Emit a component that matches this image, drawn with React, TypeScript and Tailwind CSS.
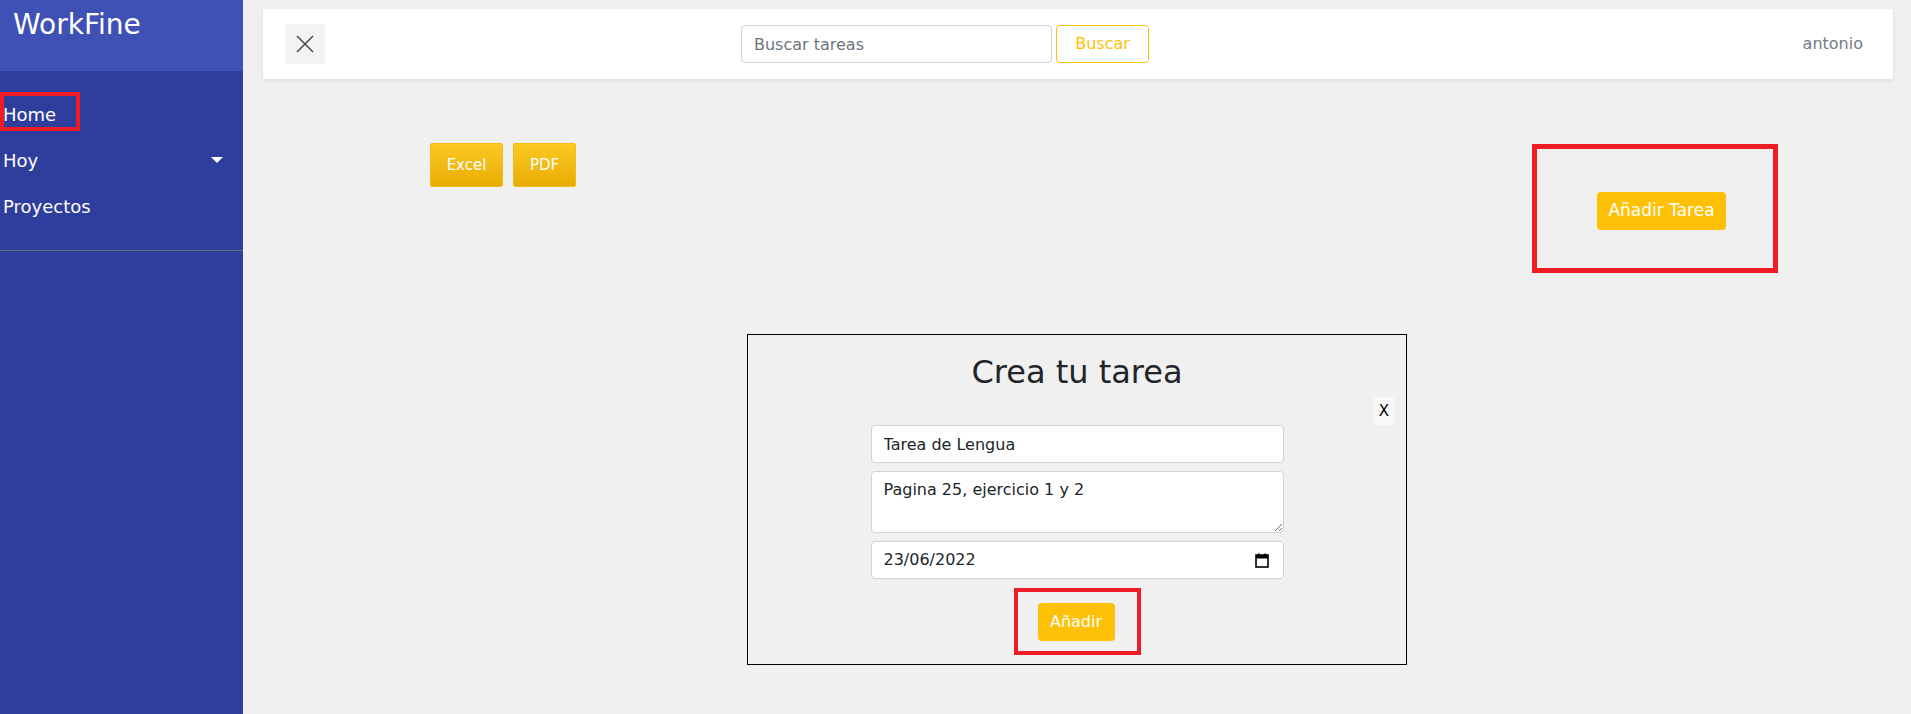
import React from "react";

function CloseIcon() {
    return (
        <svg width="18" height="18" viewBox="0 0 18 18" fill="none" stroke="#4a4a4a" strokeWidth="1.6">
            <line x1="1" y1="1" x2="17" y2="17" />
            <line x1="17" y1="1" x2="1" y2="17" />
        </svg>
    );
}

function CalendarIcon() {
    return (
        <svg width="14" height="15" viewBox="0 0 14 15" fill="none">
            <rect x="1" y="2" width="12" height="12" stroke="#000" strokeWidth="1.6" />
            <rect x="1" y="2" width="12" height="3.5" fill="#000" />
            <rect x="3" y="0.5" width="1.6" height="2.5" fill="#000" />
            <rect x="9.4" y="0.5" width="1.6" height="2.5" fill="#000" />
        </svg>
    );
}

export default function App() {
    return (
        <div className="flex h-screen w-full bg-[#f0f0f0] font-['DejaVu_Sans',sans-serif] overflow-hidden">
            {/* sidebar */}
            <aside className="w-[243px] shrink-0 bg-[#2f3d9d] text-white">
                <div className="h-[71px] bg-[#3f51b5] pl-[13px] pt-[8px]">
                    <h1 className="text-[28px] leading-[33px] font-medium">WorkFine</h1>
                </div>
                <nav className="pt-[20px] pb-[21px] border-b border-[#4f7a7e]">
                    <div className="relative h-[46px] flex items-center pl-[3px] text-[18px]">
                        Home
                        <span className="absolute left-0 top-[1px] w-[80px] h-[39px] border-4 border-[#ee1c25]"></span>
                    </div>
                    <div className="h-[46px] flex items-center justify-between pl-[3px] pr-[20px] text-[18px]">
                        Hoy
                        <span className="w-0 h-0 border-l-[6px] border-r-[6px] border-t-[6px] border-l-transparent border-r-transparent border-t-white"></span>
                    </div>
                    <div className="h-[46px] flex items-center pl-[3px] text-[18px]">Proyectos</div>
                </nav>
            </aside>

            {/* main */}
            <main className="flex-1 flex flex-col">
                <header className="mt-[9px] ml-[20px] mr-[18px] h-[70px] bg-white shadow-[0_2px_4px_rgba(0,0,0,0.08)] flex items-center pl-[22px] pr-[30px]">
                    <button className="w-[40px] h-[40px] bg-[#f3f3f3] flex items-center justify-center">
                        <CloseIcon />
                    </button>
                    <div className="ml-[416px] flex gap-[4px]">
                        <input
                            className="w-[311px] h-[38px] border border-[#ced4da] rounded-[4px] px-[12px] text-[16px] text-[#212529] placeholder:text-[#6c757d] bg-white"
                            placeholder="Buscar tareas"
                        />
                        <button className="w-[93px] h-[38px] border border-[#ffc107] rounded-[4px] text-[#ffc107] text-[16px]">
                            Buscar
                        </button>
                    </div>
                    <span className="ml-auto text-[16px] text-[#757b85]">antonio</span>
                </header>

                <div className="mt-[64px] pl-[187px] pr-[133px] flex justify-between items-start">
                    <div className="flex gap-[10px]">
                        <button className="w-[73px] h-[44px] rounded-[2px] border border-[#f4bf10] bg-gradient-to-b from-[#fdc820] to-[#e8ad03] text-white text-[15px]">
                            Excel
                        </button>
                        <button className="w-[63px] h-[44px] rounded-[2px] border border-[#f4bf10] bg-gradient-to-b from-[#fdc820] to-[#e8ad03] text-white text-[15px]">
                            PDF
                        </button>
                    </div>
                    <div className="mt-[1px] w-[246px] h-[129px] border-[5px] border-[#ee1c25] pl-[60px] pt-[43px]">
                        <button className="w-[129px] h-[38px] rounded-[4px] bg-[#ffc107] text-white text-[17px]">
                            Añadir Tarea
                        </button>
                    </div>
                </div>

                <section className="mt-[61px] mx-auto w-[660px] border border-black flex flex-col items-center pb-[9px]">
                    <h2 className="mt-[18px] text-[32px] leading-[38px] text-[#212529]">Crea tu tarea</h2>
                    <div className="mt-[6px] w-full flex justify-end pr-[12px]">
                        <button className="w-[20px] h-[28px] bg-[#f8f8f8] text-[15px] text-black">X</button>
                    </div>
                    <div className="w-[413px] flex flex-col gap-[8px]">
                        <input
                            className="h-[38px] border border-[#ced4da] rounded-[4px] px-[12px] text-[16px] text-[#212529] bg-white"
                            defaultValue="Tarea de Lengua"
                        />
                        <textarea
                            className="h-[62px] border border-[#ced4da] rounded-[4px] px-[12px] py-[6px] text-[16px] text-[#212529] bg-white"
                            defaultValue="Pagina 25, ejercicio 1 y 2"
                        />
                        <div className="h-[38px] border border-[#ced4da] rounded-[4px] pl-[12px] pr-[14px] bg-white flex items-center justify-between">
                            <span className="text-[16px] text-[#212529]">23/06/2022</span>
                            <CalendarIcon />
                        </div>
                    </div>
                    <div className="mt-[9px] w-[127px] h-[67px] border-4 border-[#ee1c25] pl-[20px] pt-[11px]">
                        <button className="w-[77px] h-[38px] rounded-[4px] bg-[#ffc107] text-white text-[16px]">
                            Añadir
                        </button>
                    </div>
                </section>
            </main>
        </div>
    );
}
